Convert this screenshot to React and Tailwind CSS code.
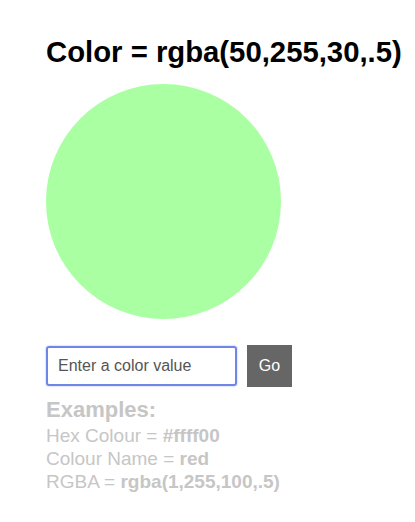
export default function App() {
  return (
    <div className="bg-white min-h-[522px] w-[415px] pl-[46px] pt-[34px]" style={{ fontFamily: '"Liberation Sans", Arial, sans-serif' }}>
      <h1 className="text-[29.3px] leading-[36px] font-bold text-black m-0 whitespace-nowrap">Color = rgba(50,255,30,.5)</h1>
      <div className="mt-[14px] w-[235px] h-[235px] rounded-full bg-[rgba(50,255,30,0.42)]"></div>
      <div className="mt-[26px] flex items-center gap-[10px]">
        <input
          className="w-[191px] h-[40px] border-2 border-[#6f86e6] rounded-[3px] px-[10px] text-[16px] outline-none placeholder:text-[#555] shadow-[0_0_2px_#9fb0f0]"
          placeholder="Enter a color value"
        />
        <button className="w-[45px] h-[42px] bg-[#666] text-white text-[16px]">Go</button>
      </div>
      <div className="mt-[9px] text-[#c6c6c6]">
        <div className="text-[22px] font-bold leading-[28px]">Examples:</div>
        <div className="text-[19px] leading-[23px]">Hex Colour = <b>#ffff00</b></div>
        <div className="text-[19px] leading-[23px]">Colour Name = <b>red</b></div>
        <div className="text-[19px] leading-[23px]">RGBA = <b>rgba(1,255,100,.5)</b></div>
      </div>
    </div>
  );
}
